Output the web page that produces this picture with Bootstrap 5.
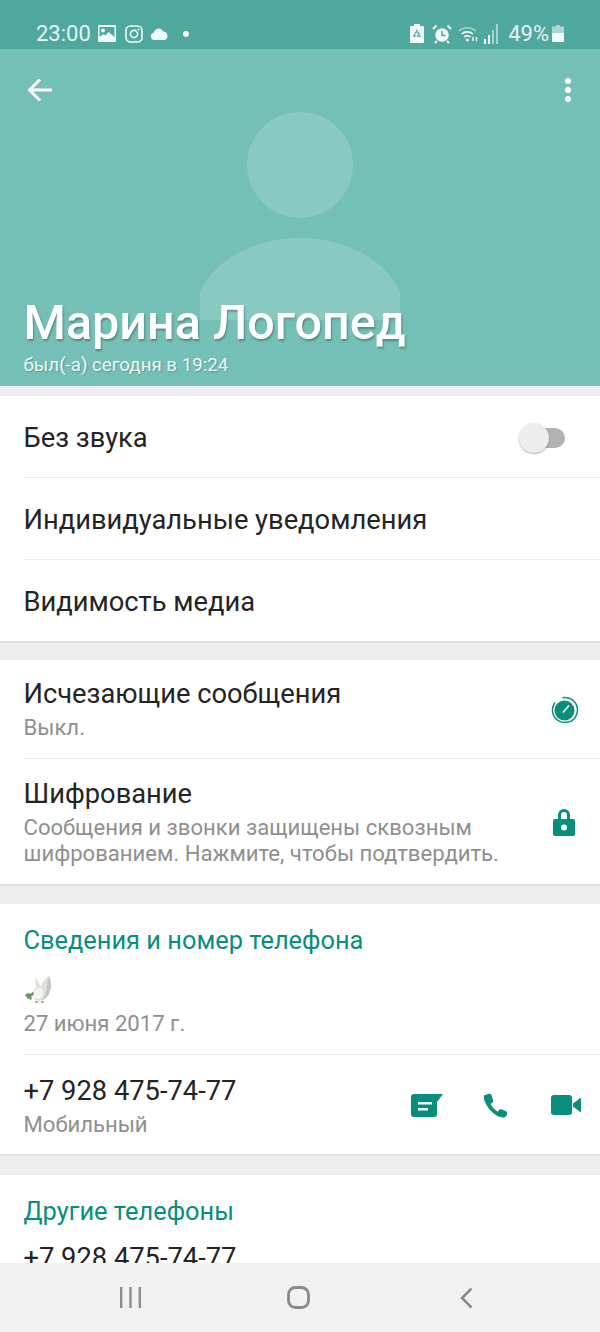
<!DOCTYPE html>
<html lang="ru">
<head>
  <meta charset="UTF-8">
  <title>Марина Логопед</title>
  <link href="https://cdn.jsdelivr.net/npm/bootstrap@5.3.0/dist/css/bootstrap.min.css" rel="stylesheet">
  <style>
    html, body { height: 1332px; overflow: hidden; }
    body { font-family: Roboto, "Liberation Sans", sans-serif; background: #efeded; color: #242424; }
    .shell { height: 1332px; }
    .scroller { min-height: 0; overflow: hidden; }

    .status-strip { height: 49px; flex: none; background: #4fa89e; color: #e6f4f1; padding: 18px 36px 0 36px; font-size: 22px; line-height: 1; }
    .status-strip svg { display: block; flex: none; }
    .st-gallery { margin-left: 7px; }
    .st-insta { margin-left: 9px; }
    .st-cloud { margin-left: 7px; }
    .st-dot { margin-left: 14px; }
    .st-alarm { margin-left: 8px; }
    .st-wifi { margin-left: 6px; }
    .st-signal { margin-left: 5px; }
    .st-pct { margin-left: 9px; }
    .st-batt { margin-left: 3px; }

    .hero { height: 337px; flex: none; background: #74bfb6; overflow: hidden; color: #fff; }
    .hero-figure { position: absolute; left: 200px; top: 54px; }
    .hero-bar { position: relative; padding: 28px 28px 0 26px; }
    .hero-text { position: absolute; left: 23.500px; bottom: 10px; }
    .hero-name { font-size: 48.500px; line-height: 56px; font-weight: 500; margin: 0 0 4px; text-shadow: 1px 2px 2px rgba(0, 0, 0, .28); white-space: nowrap; }
    .hero-seen { font-size: 18.700px; line-height: 21px; color: #eef8f6; text-shadow: 1px 1px 1px rgba(0, 0, 0, .2); white-space: nowrap; }

    .panel { background: #fff; border-bottom: 2px solid #e2e2e2; flex: none; }
    .gap-first { height: 10px; flex: none; }
    .gap-block { height: 17px; flex: none; }
    .gap-wide { height: 18px; flex: none; }
    .gap-last { height: 19px; flex: none; }
    .row-line { padding: 0 24px 0 23.500px; position: relative; }
    .row-line + .row-line::before { content: ""; position: absolute; left: 24px; right: 0; top: -1px; height: 1px; background: #ececec; }
    .row-main { font-size: 27.300px; line-height: 34px; white-space: nowrap; }
    .row-sub { font-size: 22.100px; line-height: 25.500px; color: #8f8f8f; white-space: nowrap; margin-top: 4px; }
    .row-plain { height: 82px; padding-top: 2px; }
    .row-plain:last-child { height: 81px; padding-top: 3px; }
    .row-timer { height: 99px; padding-top: 17px; }
    .row-lock { height: 125px; padding-top: 18px; }
    .row-about { height: 100px; padding-top: 20px; }
    .row-about .row-sub { margin-top: 6px; }
    .row-phone { height: 99px; padding-top: 19px; }
    .row-clip { height: 60px; padding-top: 15px; }
    .group-title { font-size: 25.400px; line-height: 30px; color: #078e7c; font-weight: 400; padding: 21px 24px 0 23.500px; margin: 0; white-space: nowrap; }

    .switch-track { width: 33px; height: 20px; border-radius: 10px; background: #b2b2b2; position: relative; margin-right: 11px; }
    .switch-knob { position: absolute; left: -13px; top: -5px; width: 30px; height: 30px; border-radius: 50%; background: #ededed; box-shadow: 0 1px 2px rgba(0, 0, 0, .3); }

    .ic-timer { margin: 19px -3px 0 0; flex: none; }
    .ic-lock { margin: 31px 1px 0 0; flex: none; }
    .ic-dove { display: block; margin-left: 1px; }
    .contact-acts { height: 62px; margin-right: -5px; }
    .act-call { margin-left: 40px; }
    .act-video { margin-left: 43px; }

    .bottom-nav { height: 69px; flex: none; background: #f1f1f1; padding-left: 120px; }
    .nav-home { margin-left: 146px; }
    .nav-back { margin-left: 150px; }
  </style>
</head>
<body>
  <div class="shell d-flex flex-column">

    <!-- Status bar -->
    <div class="status-strip d-flex align-items-center">
      <span>23:00</span>
      <svg class="st-gallery" width="18" height="17" viewBox="0 0 18 17"><path fill="#f2faf8" fill-rule="evenodd" d="M1 0h16a1 1 0 0 1 1 1v15a1 1 0 0 1-1 1H1a1 1 0 0 1-1-1V1a1 1 0 0 1 1-1Zm4 3.500a2 2 0 1 0 0 4 2 2 0 0 0 0-4ZM1.500 2v10l4-3 2 1.500 3-3.500 6 5V2H1.500Z"/></svg>
      <svg class="st-insta" width="18" height="18" viewBox="0 0 18 18"><rect x="1" y="1" width="16" height="16" rx="4.500" fill="none" stroke="#f2faf8" stroke-width="1.600"/><circle cx="9" cy="9" r="3.600" fill="none" stroke="#f2faf8" stroke-width="1.600"/><circle cx="13.500" cy="4.500" r="1" fill="#f2faf8"/></svg>
      <svg class="st-cloud" width="19" height="12" viewBox="0 0 20 13"><path fill="#f2faf8" d="M4.500 13a4 4 0 0 1-.8-7.900A5.500 5.500 0 0 1 14 3.700 4.800 4.800 0 0 1 15.500 13h-11Z"/></svg>
      <svg class="st-dot" width="6" height="6" viewBox="0 0 6 6"><circle cx="3" cy="3" r="3" fill="#f2faf8"/></svg>
      <div class="flex-grow-1"></div>
      <svg width="14" height="19" viewBox="0 0 14 19"><path fill="#f2faf8" d="M4 0h6v2h3a1 1 0 0 1 1 1v15a1 1 0 0 1-1 1H1a1 1 0 0 1-1-1V3a1 1 0 0 1 1-1h3V0Z"/><path d="M7 6.500 4 12h6Z" fill="none" stroke="#4fa89e" stroke-width="1.500" stroke-dasharray="3.500 1"/></svg>
      <svg class="st-alarm" width="20" height="20" viewBox="0 0 20 20"><circle cx="10" cy="11" r="6.800" fill="#f2faf8"/><path d="M10 7v4.500h3.500" fill="none" stroke="#4fa89e" stroke-width="1.500"/><path d="M1 5l3.500-3.500M19 5l-3.500-3.500M5 17l-2 2M15 17l2 2" stroke="#f2faf8" stroke-width="2" fill="none"/></svg>
      <svg class="st-wifi" width="21" height="18" viewBox="0 0 21 18"><path d="M.8 6a12.500 12.500 0 0 1 17 0" fill="none" stroke="#a9d6cf" stroke-width="1.500"/><path d="M3.500 9a9 9 0 0 1 11.500 0M6 12a5 5 0 0 1 6.500 0" fill="none" stroke="#f2faf8" stroke-width="1.600"/><circle cx="9.300" cy="15" r="1.600" fill="#f2faf8"/><path d="M15 12v4M18.500 16v-4" stroke="#f2faf8" stroke-width="1.400"/></svg>
      <svg class="st-signal" width="15" height="20" viewBox="0 0 15 20"><rect x="0" y="15" width="2" height="5" fill="#f2faf8"/><rect x="4" y="11" width="2" height="9" fill="#f2faf8"/><rect x="8" y="6" width="2" height="14" fill="#a9d6cf"/><rect x="12" y="0" width="2" height="20" fill="#a9d6cf"/></svg>
      <span class="st-pct">49%</span>
      <svg class="st-batt" width="12" height="17" viewBox="0 0 12 17"><path fill="#a9d6cf" d="M4 0h4v1.500h3a1 1 0 0 1 1 1V8H0V2.500a1 1 0 0 1 1-1h3V0Z"/><path fill="#f2faf8" d="M0 8h12v8a1 1 0 0 1-1 1H1a1 1 0 0 1-1-1V8Z"/></svg>
    </div>

    <!-- Header -->
    <div class="hero position-relative">
      <svg class="hero-figure" width="200" height="284" viewBox="0 0 200 284"><circle cx="100" cy="62" r="53" fill="#8ac9c2"/><path d="M0 217V189C14 157 54 135 100 135s86 22 100 54V217Z" fill="#8ac9c2"/></svg>
      <div class="hero-bar d-flex justify-content-between align-items-start">
        <svg width="28" height="26" viewBox="0 0 28 26"><path d="M26 13H4M14 2.500 3.500 13 14 23.500" fill="none" stroke="#fff" stroke-width="3"/></svg>
        <svg width="8" height="26" viewBox="0 0 8 26"><circle cx="4" cy="4" r="3" fill="#fff"/><circle cx="4" cy="13" r="3" fill="#fff"/><circle cx="4" cy="22" r="3" fill="#fff"/></svg>
      </div>
      <div class="hero-text">
        <h1 class="hero-name">Марина Логопед</h1>
        <div class="hero-seen">был(-а) сегодня в 19:24</div>
      </div>
    </div>
    <div class="gap-first"></div>

    <div class="scroller flex-grow-1">
      <!-- Mute and media -->
      <div class="panel">
        <div class="row-line row-plain d-flex align-items-center justify-content-between">
          <div class="row-main">Без звука</div>
          <div class="switch-track"><div class="switch-knob"></div></div>
        </div>
        <div class="row-line row-plain d-flex align-items-center"><div class="row-main">Индивидуальные уведомления</div></div>
        <div class="row-line row-plain d-flex align-items-center"><div class="row-main">Видимость медиа</div></div>
      </div>
      <div class="gap-block"></div>

      <!-- Privacy -->
      <div class="panel">
        <div class="row-line row-timer d-flex justify-content-between">
          <div>
            <div class="row-main">Исчезающие сообщения</div>
            <div class="row-sub">Выкл.</div>
          </div>
          <svg class="ic-timer" width="28" height="28" viewBox="0 0 28 28"><circle cx="14" cy="14" r="12.500" fill="none" stroke="#078e7c" stroke-width="1.500" stroke-dasharray="60 9" transform="rotate(-60 14 14)"/><circle cx="13.500" cy="14.500" r="10" fill="#078e7c"/><path d="M12 16.500 18 9.500" stroke="#e6f4f1" stroke-width="1.800"/></svg>
        </div>
        <div class="row-line row-lock d-flex justify-content-between">
          <div>
            <div class="row-main">Шифрование</div>
            <div class="row-sub">Сообщения и звонки защищены сквозным<br>шифрованием. Нажмите, чтобы подтвердить.</div>
          </div>
          <svg class="ic-lock" width="22" height="28" viewBox="0 0 22 28"><path fill="#078e7c" fill-rule="evenodd" d="M5 11V7a6 6 0 0 1 12 0v4h3a2 2 0 0 1 2 2v13a2 2 0 0 1-2 2H2a2 2 0 0 1-2-2V13a2 2 0 0 1 2-2h3Zm3 0h6V7a3 3 0 0 0-6 0v4Zm3 5.500a3 3 0 1 0 0 6 3 3 0 0 0 0-6Z"/></svg>
        </div>
      </div>
      <div class="gap-wide"></div>

      <!-- About and phone -->
      <div class="panel">
        <h2 class="group-title">Сведения и номер телефона</h2>
        <div class="row-line row-about">
          <svg class="ic-dove" width="30" height="30" viewBox="0 0 30 30">
            <path fill="#dfe2dc" d="M10 3c3 2 5 5 5 9 2-3 4-9 9-11 2 5 3 10 1 15-1 5-5 9-10 10-4 0-7-2-8-7 0-3 2-5 4-6 0-3-1-7-1-10Z"/>
            <path fill="#c4c8c2" d="M24 1c2 5 3 10 1 15-1 4-4 8-8 9 3-5 5-9 5-14 0-4 1-7 2-10Z"/>
            <path fill="#f4f5f2" d="M8 18c1-3 4-5 7-5 3 1 4 4 3 7-1 2-3 4-6 4-3-1-5-3-4-6Z"/>
            <path fill="#5f9a55" d="M1 19l3-1 1 1 3-2 1 2-3 3 1 2-2 1-1-2-2 1 0-2-2-1Z"/>
            <path fill="#d3a78b" d="M10 26h3v2h-3ZM16 26h3v2h-3Z"/>
          </svg>
          <div class="row-sub">27 июня 2017 г.</div>
        </div>
        <div class="row-line row-phone d-flex justify-content-between">
          <div>
            <div class="row-main">+7 928 475-74-77</div>
            <div class="row-sub">Мобильный</div>
          </div>
          <div class="contact-acts d-flex align-items-center">
            <svg width="32" height="23" viewBox="0 0 32 23"><path fill="#078e7c" fill-rule="evenodd" d="M3 0h29l-6 8v12a3 3 0 0 1-3 3H3a3 3 0 0 1-3-3V3a3 3 0 0 1 3-3Zm4 8v2.500h14V8H7Zm0 6v2.500h10V14H7Z"/></svg>
            <svg class="act-call" width="25" height="25" viewBox="0 0 26 26"><path fill="#078e7c" d="M5.200 1 1 2.500C.5 5 1.500 10 6 16c5 6 10 9 15 9.500 2 0 3.500-1.500 4-3.500.3-1.500 0-2.500-1-3l-5-2c-1-.4-2 0-2.500 1l-1 1.500c-3-1.500-6-4.500-7.500-8l2-1.500C10.500 9.500 10.800 8.500 10.500 7.500L9 2.500C8.500.5 7 .5 5.200 1Z"/></svg>
            <svg class="act-video" width="30" height="20" viewBox="0 0 30 20"><rect x="0" y="0" width="21" height="20" rx="3" fill="#078e7c"/><path fill="#078e7c" d="M22 8.500c2-1.500 4-3 6-4.500a1 1 0 0 1 2 0v12a1 1 0 0 1-2 0c-2-1.500-4-3-6-4.500Z"/></svg>
          </div>
        </div>
      </div>
      <div class="gap-last"></div>

      <!-- Other phones -->
      <div class="panel">
        <h2 class="group-title">Другие телефоны</h2>
        <div class="row-line row-clip">
          <div class="row-main">+7 928 475-74-77</div>
        </div>
      </div>
    </div>

    <!-- System navigation -->
    <div class="bottom-nav d-flex align-items-center">
      <svg width="21" height="21" viewBox="0 0 21 21"><path d="M1.200 0v21M10.500 0v21M19.800 0v21" stroke="#8a8a8a" stroke-width="2.300" fill="none"/></svg>
      <svg class="nav-home" width="23" height="23" viewBox="0 0 23 23"><rect x="1.500" y="1.500" width="20" height="20" rx="7" fill="none" stroke="#8a8a8a" stroke-width="2.800"/></svg>
      <svg class="nav-back" width="13" height="22" viewBox="0 0 13 22"><path d="M11.500 1.500 2 11l9.500 9.500" fill="none" stroke="#8a8a8a" stroke-width="2.500"/></svg>
    </div>
  </div>
</body>
</html>
